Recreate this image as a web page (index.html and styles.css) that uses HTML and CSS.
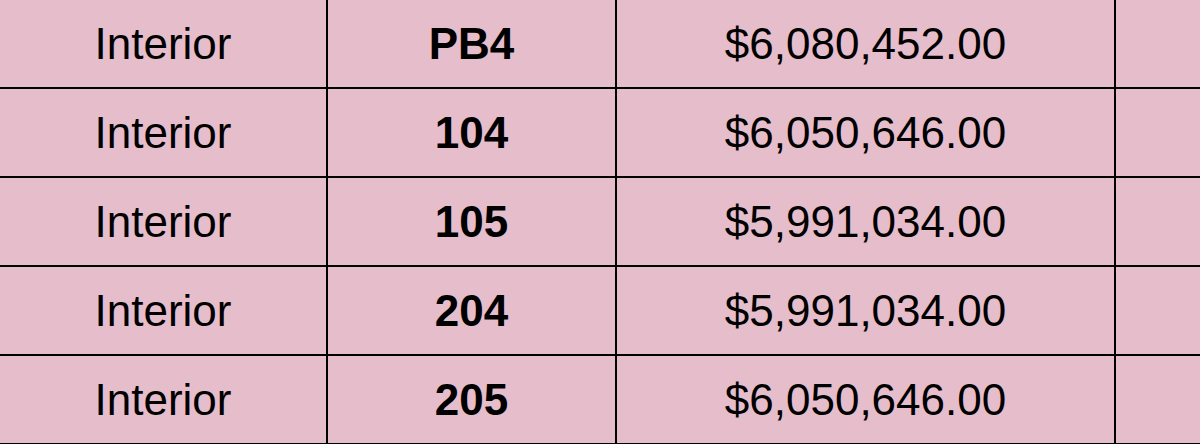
FILE: index.html
```html
<!DOCTYPE html>
<html>
<head>
<meta charset="utf-8">
<link rel="stylesheet" href="styles.css">
</head>
<body>
<div class="table">
  <div class="cell">Interior</div><div class="cell unit">PB4</div><div class="cell">$6,080,452.00</div><div class="cell last"></div>
  <div class="cell">Interior</div><div class="cell unit">104</div><div class="cell">$6,050,646.00</div><div class="cell last"></div>
  <div class="cell">Interior</div><div class="cell unit">105</div><div class="cell">$5,991,034.00</div><div class="cell last"></div>
  <div class="cell">Interior</div><div class="cell unit">204</div><div class="cell">$5,991,034.00</div><div class="cell last"></div>
  <div class="cell">Interior</div><div class="cell unit">205</div><div class="cell">$6,050,646.00</div><div class="cell last"></div>
</div>
</body>
</html>
```
FILE: styles.css
```css
html, body {
  margin: 0;
  padding: 0;
  background: #e6bdcb;
  overflow: hidden;
}
.table {
  display: grid;
  grid-template-columns: 328px 289px 499px 1fr;
  grid-auto-rows: 89px;
  width: 1200px;
  font-family: "Liberation Sans", Arial, sans-serif;
  font-size: 44px;
  color: #000;
}
.cell {
  display: flex;
  align-items: center;
  justify-content: center;
  border-right: 2px solid #000;
  border-bottom: 2px solid #000;
  box-sizing: border-box;
  background: #e6bdcb;
}
.cell.last {
  border-right: none;
}
.unit {
  font-weight: bold;
}
```
